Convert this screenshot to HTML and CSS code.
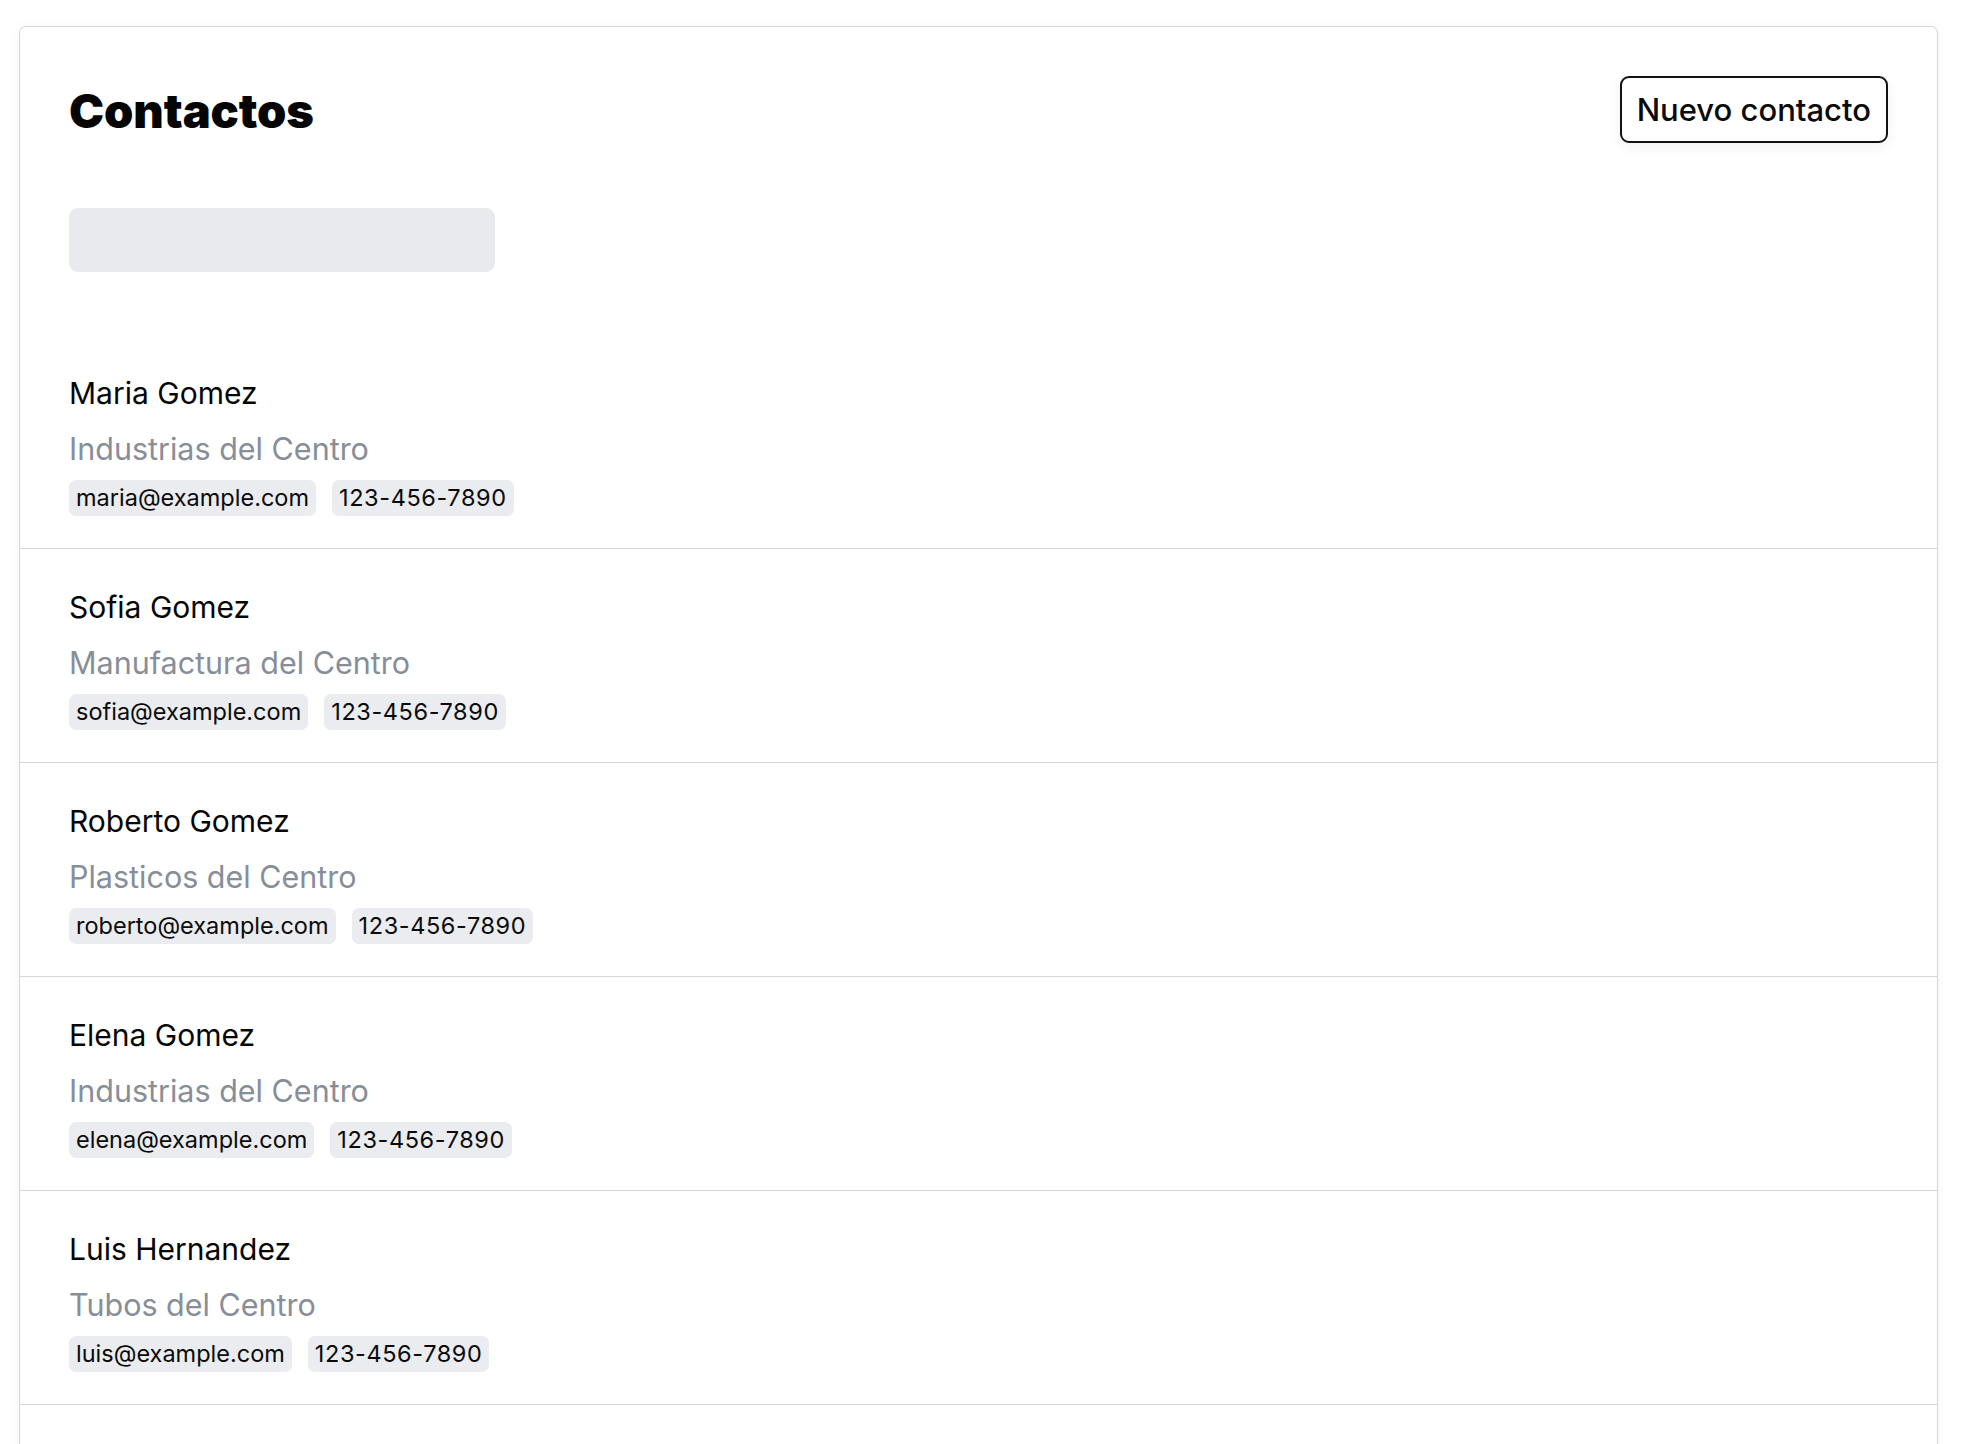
FILE: index.html
```html
<!DOCTYPE html>
<html lang="es">
<head>
<meta charset="utf-8">
<title>Contactos</title>
<link rel="stylesheet" href="styles.css">
</head>
<body>
<main class="card">
  <header class="card-header">
    <h1 class="title">Contactos</h1>
    <button class="btn-new" type="button">Nuevo contacto</button>
  </header>
  <input class="search" type="text" aria-label="Buscar contactos">
  <ul class="contact-list">
    <li class="contact">
      <div class="contact-name">Maria Gomez</div>
      <div class="contact-company">Industrias del Centro</div>
      <div class="chips"><span class="chip">maria@example.com</span><span class="chip chip-phone">123-456-7890</span></div>
    </li>
    <li class="contact">
      <div class="contact-name">Sofia Gomez</div>
      <div class="contact-company">Manufactura del Centro</div>
      <div class="chips"><span class="chip">sofia@example.com</span><span class="chip chip-phone">123-456-7890</span></div>
    </li>
    <li class="contact">
      <div class="contact-name">Roberto Gomez</div>
      <div class="contact-company">Plasticos del Centro</div>
      <div class="chips"><span class="chip">roberto@example.com</span><span class="chip chip-phone">123-456-7890</span></div>
    </li>
    <li class="contact">
      <div class="contact-name">Elena Gomez</div>
      <div class="contact-company">Industrias del Centro</div>
      <div class="chips"><span class="chip">elena@example.com</span><span class="chip chip-phone">123-456-7890</span></div>
    </li>
    <li class="contact">
      <div class="contact-name">Luis Hernandez</div>
      <div class="contact-company">Tubos del Centro</div>
      <div class="chips"><span class="chip">luis@example.com</span><span class="chip chip-phone">123-456-7890</span></div>
    </li>
  </ul>
</main>
</body>
</html>
```

FILE: styles.css
```css
* { box-sizing: border-box; }

html, body {
  margin: 0;
  padding: 0;
  background: #ffffff;
}

body {
  font-family: Inter, "Noto Sans", "Liberation Sans", sans-serif;
  color: #0a0a0a;
  padding: 26px 0 0 19px;
}

.card {
  width: 1919px;
  border: 1px solid #d3d6db;
  border-radius: 7px;
  background: #ffffff;
  box-shadow: 0 0 14px rgba(0, 0, 0, 0.035);
  padding: 49px 49px 60px 49px;
}

.card-header {
  display: flex;
  align-items: center;
  justify-content: space-between;
  height: 67px;
}

.title {
  margin: 4px 0 0 0;
  font-size: 47px;
  font-weight: 900;
  line-height: 1.2;
  letter-spacing: -0.1px;
  color: #050505;
}

.btn-new {
  font-family: inherit;
  font-size: 31px;
  font-weight: 500;
  line-height: 36px;
  color: #0a0a0a;
  background: #ffffff;
  border: 2px solid #111111;
  border-radius: 9px;
  height: 67px;
  padding: 0 15px;
  box-shadow: 0 4px 14px rgba(0, 0, 0, 0.06);
}

.search {
  display: block;
  margin: 65px 0 0 0;
  width: 426px;
  height: 64px;
  border: none;
  border-radius: 9px;
  background: #e9eaed;
  outline: none;
}

.contact-list {
  list-style: none;
  margin: 63px -49px 0 -49px;
  padding: 0;
}

.contact {
  padding: 38px 49px 32px 49px;
  border-bottom: 1px solid #d3d6db;
  display: flex;
  flex-direction: column;
  align-items: flex-start;
}

.contact-name {
  font-size: 30px;
  line-height: 40px;
  color: #050505;
}

.contact-company {
  margin-top: 16px;
  font-size: 30.5px;
  line-height: 40px;
  color: #878e98;
}

.chips {
  display: flex;
  gap: 16px;
  margin-top: 11px;
}

.chip {
  display: inline-block;
  height: 36px;
  line-height: 36px;
  font-size: 23.5px;
  padding: 0 7px;
  border-radius: 7px;
  background: #ebecef;
  color: #0a0a0a;
}

.chip-phone {
  letter-spacing: 0.6px;
}
```
